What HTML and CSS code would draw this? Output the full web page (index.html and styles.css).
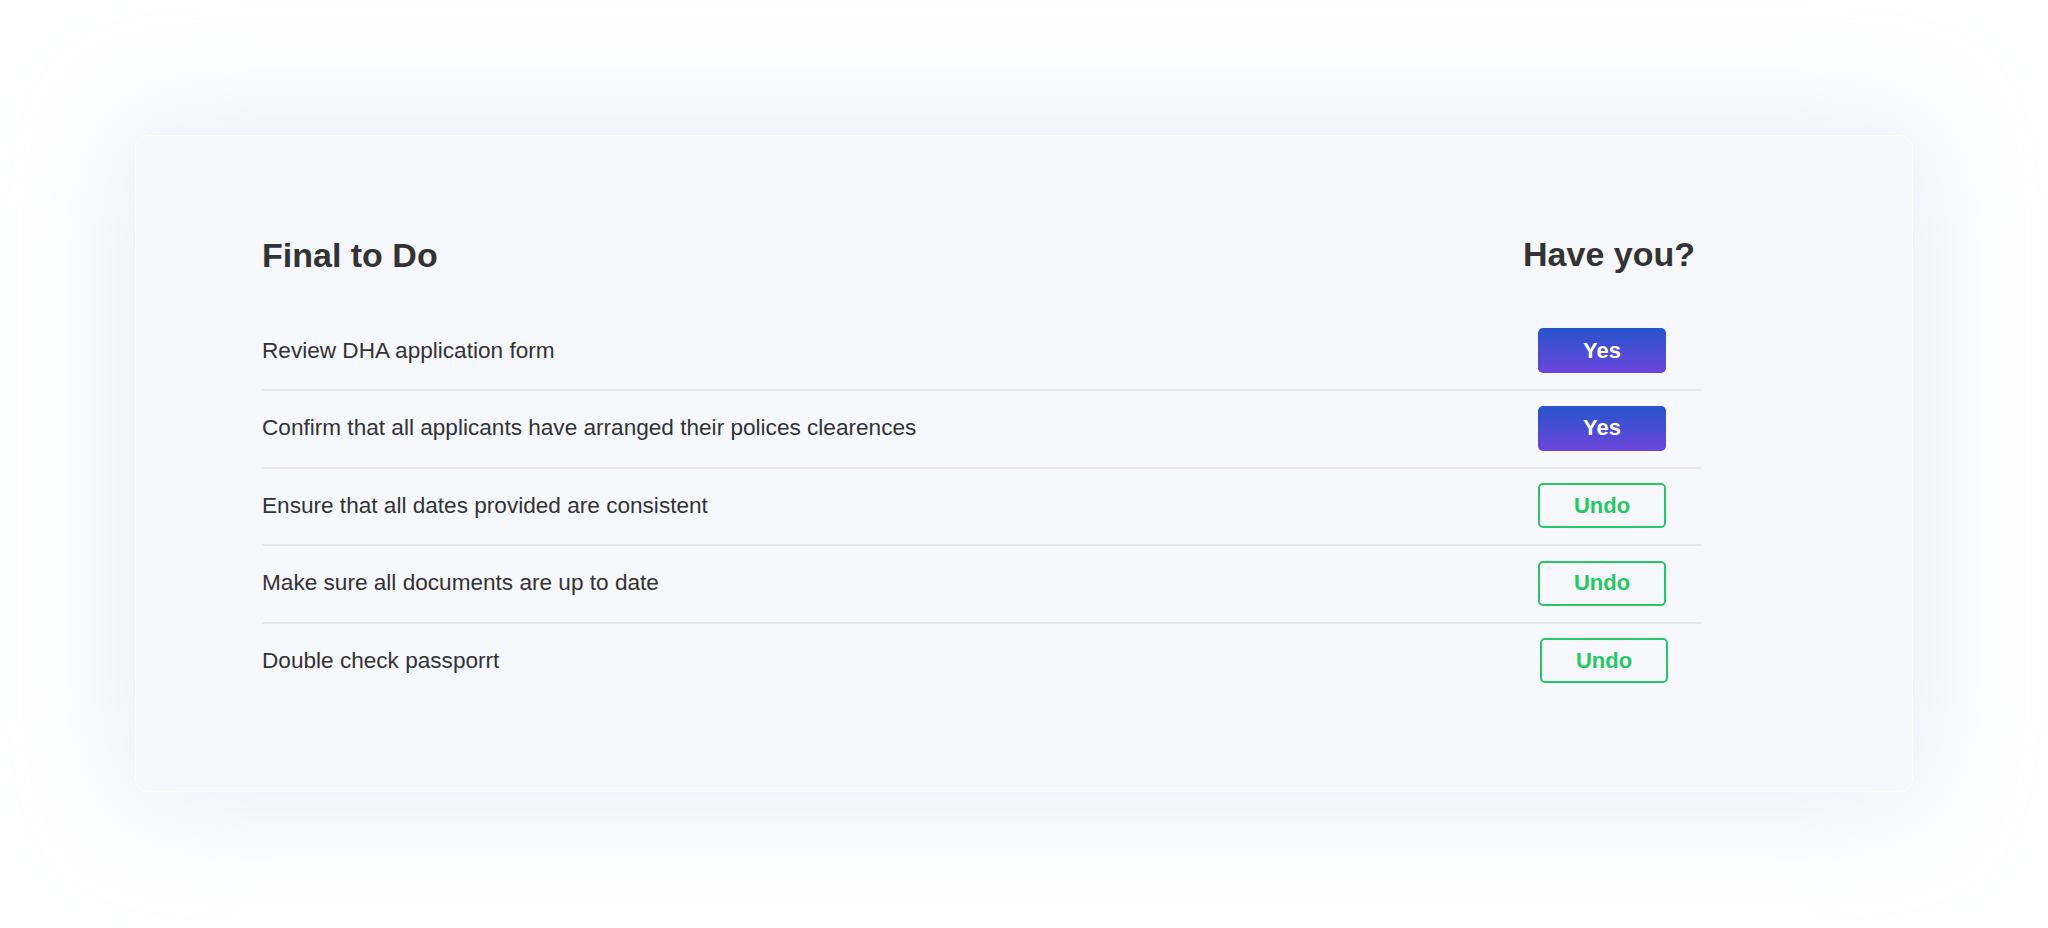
FILE: index.html
```html
<!DOCTYPE html>
<html lang="en">
<head>
<meta charset="utf-8">
<title>Final to Do</title>
<link rel="stylesheet" href="styles.css">
</head>
<body>
<div class="page">
  <section class="card">
    <div class="head">
      <h2 class="title">Final to Do</h2>
      <h2 class="title title-right">Have you?</h2>
    </div>
    <ul class="list">
      <li class="row"><span class="task">Review DHA application form</span><button class="btn btn-yes">Yes</button></li>
      <li class="row"><span class="task">Confirm that all applicants have arranged their polices clearences</span><button class="btn btn-yes">Yes</button></li>
      <li class="row"><span class="task">Ensure that all dates provided are consistent</span><button class="btn btn-undo">Undo</button></li>
      <li class="row"><span class="task">Make sure all documents are up to date</span><button class="btn btn-undo">Undo</button></li>
      <li class="row row-last"><span class="task">Double check passporrt</span><button class="btn btn-undo btn-shift">Undo</button></li>
    </ul>
  </section>
</div>
</body>
</html>
```
FILE: styles.css
```css
* { box-sizing: border-box; }
html, body { margin: 0; padding: 0; }
body {
  background: #ffffff;
  font-family: "Liberation Sans", Arial, Helvetica, sans-serif;
  color: #333333;
}
.page {
  height: 928px;
  padding: 135px 135px 136px 135px;
  display: flex;
}
.card {
  flex: 1;
  background: #f7f8fd;
  border: 1px solid #ffffff;
  border-radius: 13px;
  box-shadow: 0 0 110px 20px rgba(200, 214, 246, 0.42);
  padding: 99px 211px 0 126px;
}
.head {
  display: flex;
  justify-content: space-between;
  align-items: baseline;
  margin-bottom: 38.5px;
}
.title {
  margin: 0;
  font-size: 34px;
  line-height: 40px;
  font-weight: 700;
  color: #333333;
}
.title-right {
  margin-right: 6px;
  position: relative;
  top: -1px;
}
.list {
  list-style: none;
  margin: 0;
  padding: 0;
}
.row {
  display: flex;
  align-items: center;
  justify-content: space-between;
  padding: 14.5px 0 16px;
  border-bottom: 2px solid #e6e5f6;
}
.row-last { border-bottom: none; }
.task {
  font-size: 22.6px;
  color: #333333;
}
.btn {
  width: 128px;
  height: 45px;
  margin-right: 35px;
  border-radius: 5px;
  font-family: "Liberation Sans", Arial, Helvetica, sans-serif;
  font-size: 22px;
  font-weight: 700;
  padding: 0;
  cursor: pointer;
}
.btn-yes {
  border: none;
  color: #ffffff;
  background: linear-gradient(180deg, #2654cc 0%, #6c45dc 100%);
}
.btn-undo {
  border: 2px solid #25c865;
  color: #25c865;
  background: transparent;
}
.btn-shift { margin-right: 33px; }
```
